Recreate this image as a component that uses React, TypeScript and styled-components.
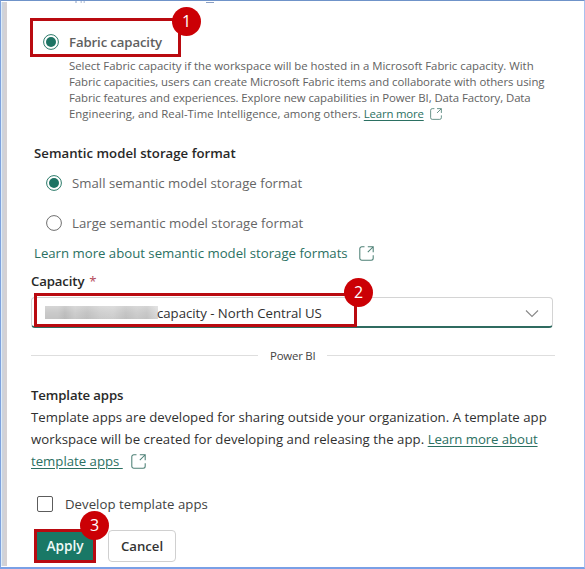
import React from "react";
import styled, { createGlobalStyle } from "styled-components";

const GlobalStyle = createGlobalStyle`
  * { box-sizing: border-box; }
  body { margin: 0; background: #fff; }
`;

const Window = styled.div`
  position: relative;
  width: 585px;
  height: 569px;
  overflow: hidden;
  background: #fff;
  border: 1px solid #7ea2de;
  border-top-color: #6f93c9;
  border-right-color: #a9c0ee;
  border-bottom: 2px solid #7aa0e6;
  font-family: "Open Sans", "Noto Sans", sans-serif;
  font-size: 13.2px;
  color: #303030;
  display: flex;
`;

const Edge = styled.div`
  width: 6px;
  margin-top: 1px;
  height: 564px;
  flex: none;
  background: linear-gradient(90deg, #dcebf8 0 1px, #cdd3dc 1px 3px, #d5d1d3 3px 6px);
`;

const Panel = styled.main`
  width: 526px;
  margin-left: 23px;
  flex: none;
  display: flex;
  flex-direction: column;
`;

const Remnants = styled.svg`
  display: block;
  width: 200px;
  height: 3px;
  margin-left: 39px;
  flex: none;
`;

const Text = styled.span<{ $ls?: number }>`
  white-space: pre;
  letter-spacing: ${(p) => p.$ls ?? 0}px;
`;

const Strong = styled(Text)`
  font-weight: 600;
`;

const Link = styled(Text)<{ $underline?: boolean }>`
  color: #2b7062;
  text-decoration: ${(p) => (p.$underline ? "underline" : "none")};
  text-underline-offset: 2px;
  text-decoration-thickness: 1px;
`;

const Highlight = styled.div<{ $w: number; $h: number }>`
  position: absolute;
  left: 0;
  top: 0;
  width: ${(p) => p.$w}px;
  height: ${(p) => p.$h}px;
  border: 3px solid #b90a10;
  pointer-events: none;
`;

const Badge = styled.div<{ $x: number; $y: number }>`
  position: absolute;
  z-index: 2;
  left: ${(p) => p.$x}px;
  top: ${(p) => p.$y}px;
  width: 29px;
  height: 29px;
  border-radius: 50%;
  background: #cb0005;
  color: #fff;
  display: flex;
  align-items: center;
  justify-content: center;
  font-size: 16px;
  line-height: 29px;
  padding-bottom: 1px;
`;

const FabricOption = styled.div`
  position: relative;
  width: 151px;
  height: 39px;
  margin-top: 14px;
  flex: none;
  display: flex;
  align-items: center;
  padding: 9px 0 0 13px;
  gap: 10px;
  color: #606060;
`;

const RadioMark = styled.svg`
  width: 16px;
  height: 16px;
  flex: none;
  display: block;
`;

const Description = styled.div`
  height: 64px;
  margin: 1px 0 0 39px;
  flex: none;
  font-size: 11.4px;
  line-height: 16px;
  color: #626262;
`;

const Line = styled.div<{ $h: number }>`
  display: flex;
  align-items: center;
  height: ${(p) => p.$h}px;
  line-height: ${(p) => p.$h}px;
`;

const Heading = styled.div<{ $top: number; $indent?: number }>`
  height: 20px;
  line-height: 20px;
  margin: ${(p) => p.$top}px 0 0 ${(p) => p.$indent ?? 0}px;
  flex: none;
  color: #282828;
`;

const RadioRow = styled.div`
  display: flex;
  align-items: center;
  gap: 10px;
  height: 40px;
  padding-left: 16px;
  flex: none;
  color: #666;
`;

const DocLink = styled.div`
  display: flex;
  align-items: center;
  gap: 11px;
  height: 20px;
  margin-left: 4px;
  flex: none;
`;

const Required = styled.span`
  color: #b3485a;
  margin-left: 5px;
`;

const Select = styled.div`
  position: relative;
  width: 522px;
  height: 31px;
  margin: 6px 0 0 1px;
  flex: none;
  display: flex;
  align-items: center;
  padding: 2px 13px 0 13px;
  border: 1px solid #d4d4d4;
  border-bottom: 2px solid #2f6b60;
  border-radius: 4px;
`;

const SelectMark = styled.div`
  position: absolute;
  left: 2px;
  top: -5px;
`;

const Redacted = styled.span`
  width: 113px;
  height: 13px;
  margin-right: -1px;
  margin-bottom: 2px;
  flex: none;
  background:
    linear-gradient(180deg, rgba(255, 255, 255, 0.22), transparent 50%, rgba(120, 120, 120, 0.08)),
    linear-gradient(90deg, #cacaca 0 13px, #bfbfbf 20px, #cecece 30px, #c4c4c4 42px, #d0d0d0 55px, #d3d3d3 68px, #c5c5c5 81px, #cecece 92px, #c8c8c8 102px, #dddddd 113px);
`;

const Chevron = styled.svg`
  width: 14px;
  height: 9px;
  margin-left: auto;
  display: block;
`;

const Divider = styled.div`
  display: flex;
  align-items: center;
  width: 525px;
  height: 20px;
  margin: 17px 0 0 1px;
  flex: none;
  font-size: 11.4px;
  gap: 12px;
  color: #444;
`;

const Rule = styled.div<{ $w: number }>`
  width: ${(p) => p.$w}px;
  height: 1px;
  background: #dedede;
`;

const Paragraph = styled.div`
  height: 66px;
  margin: 1px 0 0 1px;
  flex: none;
`;

const CheckRow = styled.div`
  display: flex;
  align-items: center;
  gap: 12px;
  height: 20px;
  margin: 22px 0 0 7px;
  flex: none;
  color: #424242;
`;

const Checkbox = styled.span`
  width: 16px;
  height: 16px;
  border: 1px solid #5c5c5c;
  border-radius: 2px;
`;

const Actions = styled.div`
  position: relative;
  display: flex;
  align-items: center;
  gap: 12px;
  height: 34px;
  margin: 15px 0 0 4px;
  flex: none;
`;

const Button = styled.button<{ $primary?: boolean }>`
  width: ${(p) => (p.$primary ? 62 : 68)}px;
  height: ${(p) => (p.$primary ? 34 : 32)}px;
  padding: 0 0 1px;
  border: ${(p) => (p.$primary ? "3px solid #b90a10" : "1px solid #d0d0d0")};
  border-radius: ${(p) => (p.$primary ? 0 : 4)}px;
  background: ${(p) => (p.$primary ? "#197866" : "#fff")};
  color: ${(p) => (p.$primary ? "#effaf6" : "#333")};
  font: 600 ${(p) => (p.$primary ? 13.7 : 13.2)}px "Open Sans", "Noto Sans", sans-serif;
`;

const IconSvg = styled.svg<{ $gap?: number }>`
  display: block;
  flex: none;
  margin-left: ${(p) => p.$gap ?? 0}px;
`;

function Radio({ checked }: { checked?: boolean }) {
  return (
    <RadioMark viewBox="0 0 16 16">
      <circle cx="8" cy="8" r="7.4" fill="none" stroke={checked ? "#2b7a69" : "#6e6e6e"} />
      {checked && <circle cx="8" cy="8" r="5" fill="#1d7363" />}
    </RadioMark>
  );
}

function OpenIcon({ size, gap }: { size: number; gap?: number }) {
  return (
    <IconSvg $gap={gap} width={size} height={size} viewBox="0 0 15 15" fill="none" stroke="#4d8076" strokeWidth="1.05">
      <path d="M5.500 .8H2.800A2 2 0 0 0 .8 2.800v9.400a2 2 0 0 0 2 2h9.400a2 2 0 0 0 2-2V9.200M8.800 .8h5.400v5.400M14 1 8.800 6.200" />
    </IconSvg>
  );
}

export default function App() {
  return (
    <>
      <GlobalStyle />
      <Window>
        <Edge />
        <Panel>
          <Remnants viewBox="0 0 200 3">
            <path d="M6 1h2M11.500 1h1.500M14.500 1h1.500M137 1.500h8" stroke="#8a9fc4" />
          </Remnants>

          <FabricOption>
            <Highlight $w={151} $h={39} />
            <Radio checked />
            <Strong $ls={-0.125}>Fabric capacity</Strong>
            <Badge $x={142} $y={-11}>1</Badge>
          </FabricOption>
          <Description>
            <Line $h={16}><Text $ls={-0.015}>Select Fabric capacity if the workspace will be hosted in a Microsoft Fabric capacity. With</Text></Line>
            <Line $h={16}><Text $ls={-0.06}>Fabric capacities, users can create Microsoft Fabric items and collaborate with others using</Text></Line>
            <Line $h={16}><Text $ls={-0.088}>Fabric features and experiences. Explore new capabilities in Power BI, Data Factory, Data</Text></Line>
            <Line $h={16}>
              <Text $ls={0.012}>Engineering, and Real-Time Intelligence, among others. </Text>
              <Link $underline $ls={-0.177}>Learn more</Link>
              <OpenIcon size={12} gap={6} />
            </Line>
          </Description>

          <Heading $top={21} $indent={4}><Strong $ls={0.02}>Semantic model storage format</Strong></Heading>
          <RadioRow><Radio checked /><Text $ls={0.01}>Small semantic model storage format</Text></RadioRow>
          <RadioRow><Radio /><Text $ls={0.015}>Large semantic model storage format</Text></RadioRow>
          <DocLink><Link $ls={-0.003}>Learn more about semantic model storage formats</Link><OpenIcon size={15} /></DocLink>

          <Heading $top={8} $indent={1}><Strong $ls={-0.13}>Capacity</Strong><Required>*</Required></Heading>
          <Select>
            <Redacted />
            <Text $ls={-0.02}>capacity - North Central US</Text>
            <Chevron viewBox="0 0 14 9"><path d="m1 1.500 6 6 6-6" fill="none" stroke="#888" strokeWidth="1.1" /></Chevron>
            <SelectMark>
              <Highlight $w={323} $h={34} />
              <Badge $x={310} $y={-15}>2</Badge>
            </SelectMark>
          </Select>

          <Divider><Rule $w={227} /><Text $ls={-0.2}>Power BI</Text><Rule $w={228} /></Divider>

          <Heading $top={20} $indent={1}><Strong $ls={-0.12}>Template apps</Strong></Heading>
          <Paragraph>
            <Line $h={22}><Text $ls={0.022}>Template apps are developed for sharing outside your organization. A template app</Text></Line>
            <Line $h={22}>
              <Text $ls={0.043}>workspace will be created for developing and releasing the app. </Text>
              <Link $underline $ls={-0.069}>Learn more about</Link>
            </Line>
            <Line $h={22}><Link $underline $ls={0}>template apps </Link><OpenIcon size={15} gap={8} /></Line>
          </Paragraph>

          <CheckRow><Checkbox /><Text $ls={0.039}>Develop template apps</Text></CheckRow>
          <Actions>
            <Button $primary>Apply</Button>
            <Button>Cancel</Button>
            <Badge $x={46} $y={-18}>3</Badge>
          </Actions>
        </Panel>
      </Window>
    </>
  );
}
